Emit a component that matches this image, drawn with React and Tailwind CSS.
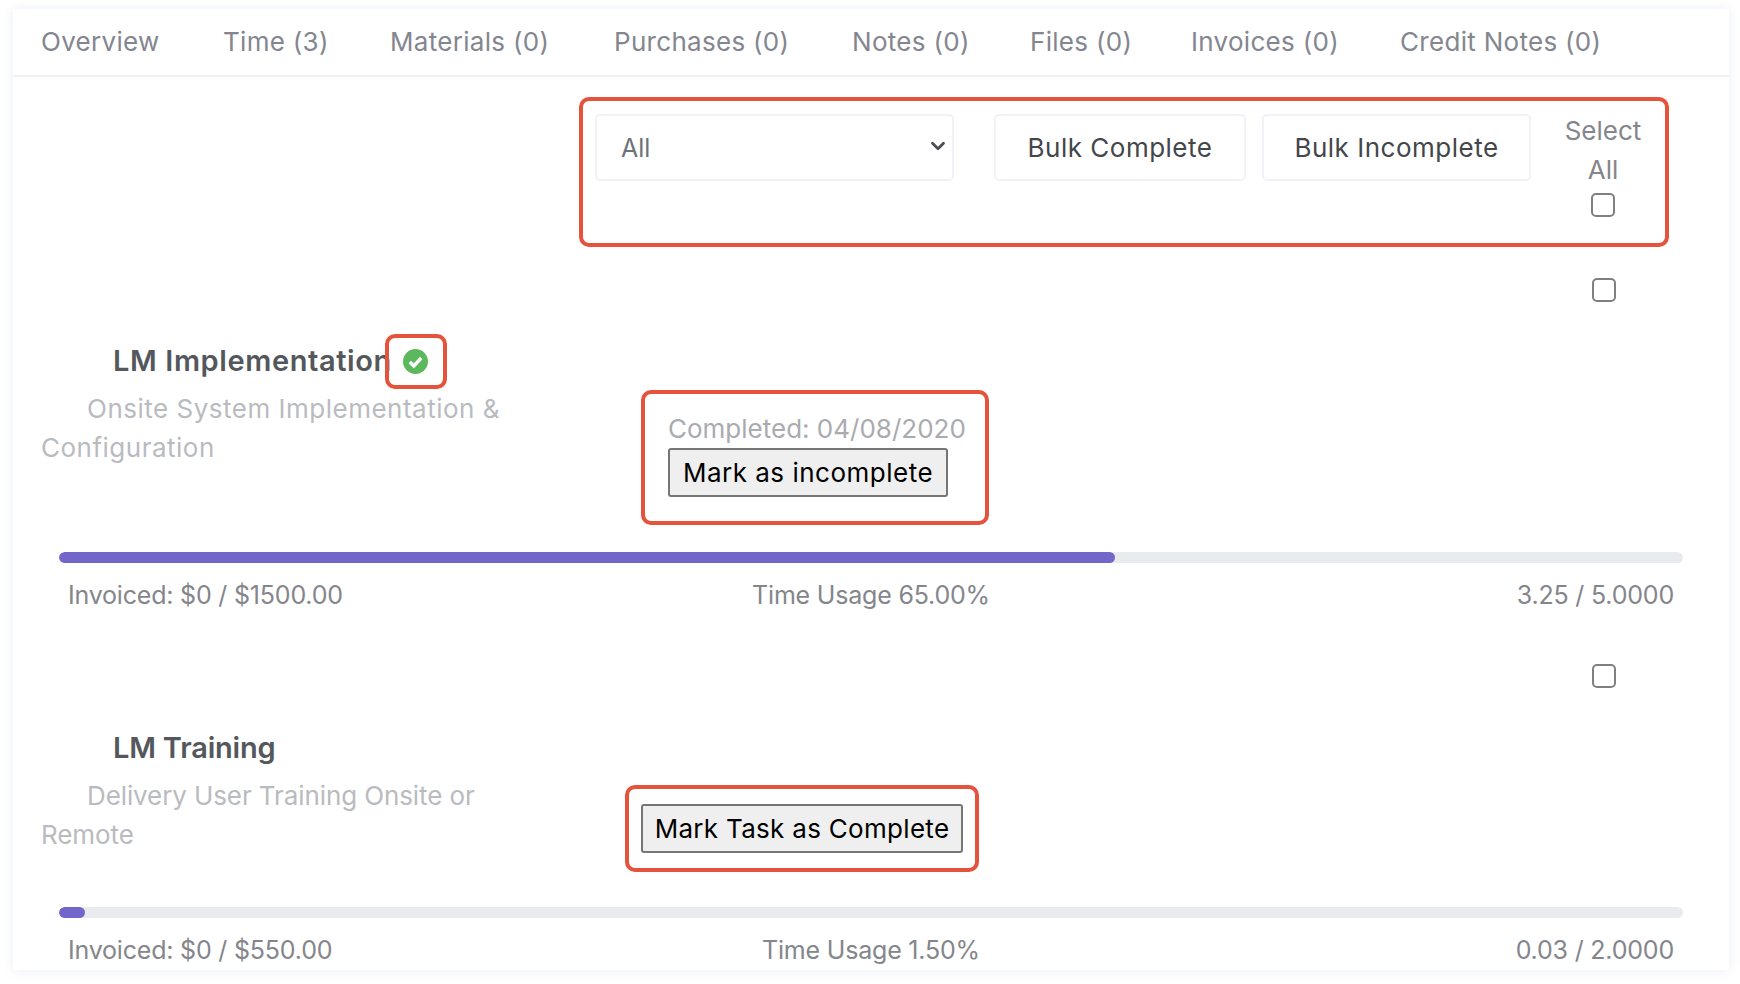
import React from 'react';
import { ChevronDown } from 'lucide-react';

const tabs = [
  { label: 'Overview', width: 'w-[182px]' },
  { label: 'Time (3)', width: 'w-[167px]' },
  { label: 'Materials (0)', width: 'w-[224px]' },
  { label: 'Purchases (0)', width: 'w-[238px]' },
  { label: 'Notes (0)', width: 'w-[178px]' },
  { label: 'Files (0)', width: 'w-[161px]' },
  { label: 'Invoices (0)', width: 'w-[209px]' },
  { label: 'Credit Notes (0)', width: 'w-auto' },
];

const Checkbox = ({ className = '' }) => (
  <input type="checkbox" className={`block appearance-none w-[24px] h-[24px] bg-white border-2 border-[#808080] rounded-[5px] ${className}`} />
);

const GreenCheck = () => (
  <svg width="25" height="25" viewBox="0 0 25 25" className="block">
    <circle cx="12.5" cy="12.5" r="12.5" fill="#5cb85c" />
    <path d="M6.8 13l4 4 7.4-8" fill="none" stroke="#fff" strokeWidth="3.4" />
  </svg>
);

const Progress = ({ pct, invoiced, usage, hours }) => (
  <div>
    <div className="mx-[46px] h-[11px] rounded-full bg-[#e9ecef] overflow-hidden">
      <div className="h-full rounded-full bg-[#7266ca]" style={{ width: pct }} />
    </div>
    <div className="mx-[55px] mt-[13px] grid grid-cols-3 text-[25px] leading-[38px] tracking-[-0.2px] text-[#84868c]">
      <span>{invoiced}</span>
      <span className="text-center">{usage}</span>
      <span className="text-right">{hours}</span>
    </div>
  </div>
);

const App = () => {
  return (
    <div className="min-h-[984px] bg-white pt-[9px] px-[13px] font-['Inter',sans-serif]">
      <div className="w-[1716px] h-[961px] overflow-hidden bg-white shadow-[0_0_10px_rgba(210,214,235,0.45)]">
        {/* Tabs */}
        <nav className="flex h-[68px] items-center border-b-2 border-[#f1f2f7] pl-[28px] pb-[2px] text-[26px] tracking-[0.3px] text-[#84868f]">
          {tabs.map((tab) => (
            <span key={tab.label} className={`whitespace-nowrap ${tab.width}`}>{tab.label}</span>
          ))}
        </nav>

        {/* Bulk actions */}
        <div className="flex justify-end mt-[20px] pr-[60px]">
          <div className="flex w-[1090px] h-[150px] gap-[16px] rounded-[10px] border-[4px] border-[#e5533d] pl-[12px] pt-[13px]">
            <div className="relative w-[359px] h-[67px] mr-[24px]">
              <select className="w-full h-full appearance-none rounded-[5px] border-2 border-[#f1f2f7] bg-white pl-[24px] pt-[2px] text-[25px] text-[#6f7277]">
                <option>All</option>
              </select>
              <ChevronDown size={22} strokeWidth={3} className="absolute right-[5px] top-[21px] text-[#4a4d52]" />
            </div>
            <button className="w-[252px] h-[67px] rounded-[5px] border-2 border-[#f1f2f7] bg-white text-[26px] tracking-[0.5px] text-[#43464b]">Bulk Complete</button>
            <button className="w-[269px] h-[67px] rounded-[5px] border-2 border-[#f1f2f7] bg-white text-[26px] tracking-[0.5px] text-[#43464b]">Bulk Incomplete</button>
            <div className="flex w-[112px] -mt-[2px] flex-col items-center text-[26px] leading-[38.5px] text-[#84868c]">
              <span>Select</span>
              <span>All</span>
              <Checkbox className="mt-[4px]" />
            </div>
          </div>
        </div>

        {/* LM Implementation */}
        <div className="flex justify-end mt-[31px] pr-[113px]">
          <Checkbox />
        </div>
        <div className="flex h-[224px] mt-[26px]">
          <div className="w-[600px] pl-[28px]">
            <div className="flex items-center h-[54px] pl-[72px] mt-[6px]">
              <h3 className="text-[29px] font-semibold tracking-[0.6px] text-[#54575c] whitespace-nowrap">LM Implementation</h3>
              <span className="relative z-10 -ml-[7px] flex items-center justify-center w-[62px] h-[55px] rounded-[10px] border-[4px] border-[#e5533d]">
                <GreenCheck />
              </span>
            </div>
            <p className="w-[480px] mt-[2px] indent-[46px] text-[26px] leading-[38.5px] tracking-[0.5px] text-[#b9bbc0]">
              Onsite System Implementation &amp; Configuration
            </p>
          </div>
          <div className="w-[348px] h-[135px] ml-[28px] mt-[62px] rounded-[10px] border-[4px] border-[#e5533d] pl-[23px] pt-[16px]">
            <p className="text-[26px] leading-[38px] whitespace-nowrap text-[#a9abb0]">Completed: 04/08/2020</p>
            <button className="w-[280px] h-[49px] rounded-[3px] border-2 border-[#767676] bg-[#efefef] text-[26px] tracking-[0.5px] text-black">Mark as incomplete</button>
          </div>
        </div>
        <Progress pct="65%" invoiced="Invoiced: $0 / $1500.00" usage="Time Usage 65.00%" hours="3.25 / 5.0000" />

        {/* LM Training */}
        <div className="flex justify-end mt-[50px] pr-[113px]">
          <Checkbox />
        </div>
        <div className="flex h-[192px] mt-[27px]">
          <div className="w-[596px] pl-[28px]">
            <div className="flex items-center h-[54px] pl-[72px] mt-[6px]">
              <h3 className="text-[29px] font-semibold tracking-[-0.2px] text-[#54575c]">LM Training</h3>
            </div>
            <p className="w-[480px] mt-[2px] indent-[46px] text-[26px] leading-[38.5px] tracking-[-0.1px] text-[#b9bbc0]">
              Delivery User Training Onsite or Remote
            </p>
          </div>
          <div className="flex items-center w-[354px] h-[87px] ml-[16px] mt-[70px] rounded-[10px] border-[4px] border-[#e5533d] pl-[12px]">
            <button className="w-[322px] h-[49px] rounded-[3px] border-2 border-[#767676] bg-[#efefef] text-[26px] tracking-[0.3px] text-black whitespace-nowrap">Mark Task as Complete</button>
          </div>
        </div>
        <Progress pct="1.6%" invoiced="Invoiced: $0 / $550.00" usage="Time Usage 1.50%" hours="0.03 / 2.0000" />
      </div>
    </div>
  );
};

export default App;
